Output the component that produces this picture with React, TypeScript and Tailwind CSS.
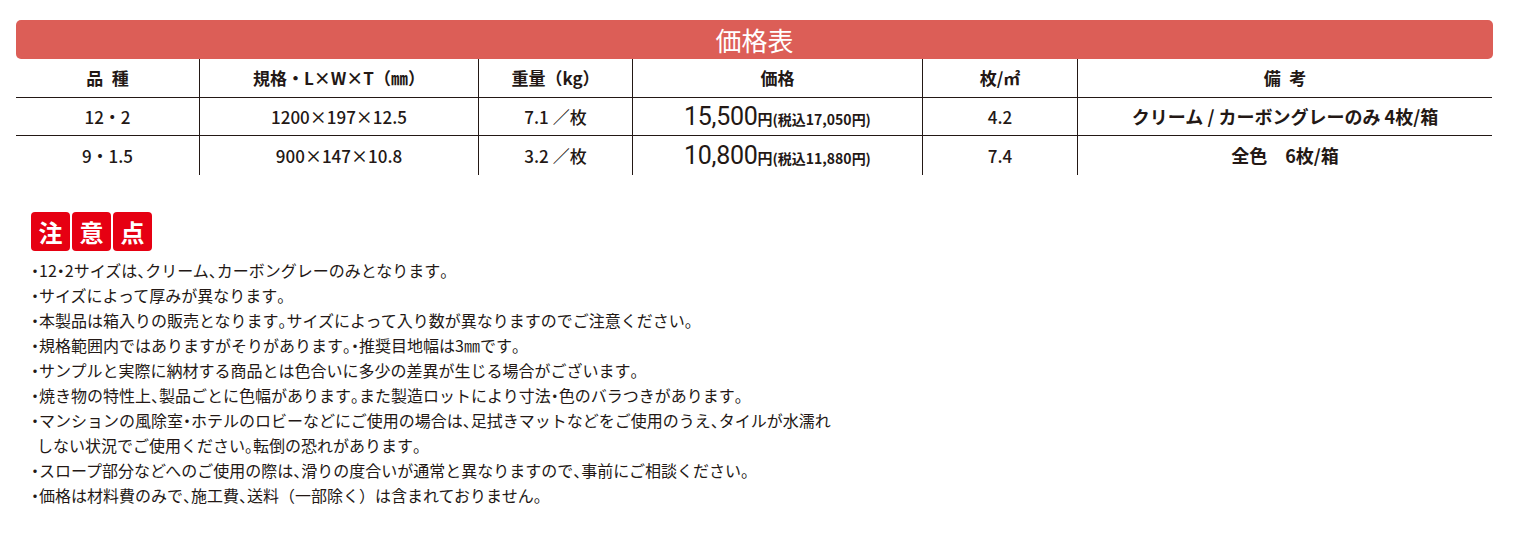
import React from "react";

const notes = [
  "・12・2サイズは、クリーム、カーボングレーのみとなります。",
  "・サイズによって厚みが異なります。",
  "・本製品は箱入りの販売となります。サイズによって入り数が異なりますのでご注意ください。",
  "・規格範囲内ではありますがそりがあります。・推奨目地幅は3㎜です。",
  "・サンプルと実際に納材する商品とは色合いに多少の差異が生じる場合がございます。",
  "・焼き物の特性上、製品ごとに色幅があります。また製造ロットにより寸法・色のバラつきがあります。",
  "・マンションの風除室・ホテルのロビーなどにご使用の場合は、足拭きマットなどをご使用のうえ、タイルが水濡れ",
  "しない状況でご使用ください。転倒の恐れがあります。",
  "・スロープ部分などへのご使用の際は、滑りの度合いが通常と異なりますので、事前にご相談ください。",
  "・価格は材料費のみで、施工費、送料（一部除く）は含まれておりません。",
];

const narrow = new Set(["・", "、", "。"]);

function NoteLine({ text }: { text: string }) {
  const parts: React.ReactNode[] = [];
  let buf = "";
  Array.from(text).forEach((ch, i) => {
    if (narrow.has(ch)) {
      if (buf) parts.push(buf);
      buf = "";
      parts.push(
        <span key={i} className='[font-feature-settings:"halt"]'>
          {ch}
        </span>
      );
    } else {
      buf += ch;
    }
  });
  if (buf) parts.push(buf);
  return <div>{parts}</div>;
}

function Cell({ children, last }: { children: React.ReactNode; last?: boolean }) {
  return (
    <div className={`flex items-center justify-center ${last ? "" : "border-r border-[#231815]"}`}>
      {children}
    </div>
  );
}

function Price({ main, tax }: { main: string; tax: string }) {
  return (
    <div className="flex items-baseline text-[#231815]">
      <span className="font-['Roboto',sans-serif] font-normal text-[25px] tracking-[-0.3px]">{main}</span>
      <span className="text-[15px] font-bold">円</span>
      <span className="text-[14px] font-bold">(税込{tax}円)</span>
    </div>
  );
}

export default function App() {
  const cols = "grid grid-cols-[184px_279px_154px_290px_155px_414px]";
  return (
    <div className="w-[1524px] h-[554px] bg-white text-[#231815] font-['Noto_Sans_CJK_JP','Noto_Sans',sans-serif]">
      <div className="pt-[20px] pl-[16px]">
        <div className="w-[1477px] h-[39px] rounded-[5px] bg-[#dc5e57] flex items-center justify-center">
          <span className="text-white text-[26px] leading-none">価格表</span>
        </div>
        <div className="w-[1476px]">
          <div className={`${cols} h-[39px] border-b border-[#231815] font-bold text-[17px]`}>
            <Cell>品{"\u2002"}種</Cell>
            <Cell>規格・L×W×T（㎜）</Cell>
            <Cell>重量（kg）</Cell>
            <Cell>価格</Cell>
            <Cell>枚/㎡</Cell>
            <Cell last>備{"\u2002"}考</Cell>
          </div>
          <div className={`${cols} h-[38px] border-b border-[#231815] text-[17px] font-medium`}>
            <Cell>12・2</Cell>
            <Cell>1200×197×12.5</Cell>
            <Cell>7.1 ／枚</Cell>
            <Cell><Price main="15,500" tax="17,050" /></Cell>
            <Cell>4.2</Cell>
            <Cell last><span className="font-bold text-[18px]">クリーム / カーボングレーのみ 4枚/箱</span></Cell>
          </div>
          <div className={`${cols} h-[39px] text-[17px] font-medium`}>
            <Cell>9・1.5</Cell>
            <Cell>900×147×10.8</Cell>
            <Cell>3.2 ／枚</Cell>
            <Cell><Price main="10,800" tax="11,880" /></Cell>
            <Cell>7.4</Cell>
            <Cell last><span className="font-bold text-[18px]">全色{"\u3000"}6枚/箱</span></Cell>
          </div>
        </div>
      </div>
      <div className="pl-[31px] pt-[37px]">
        <div className="flex gap-[2px]">
          {["注", "意", "点"].map((c) => (
            <div key={c} className="w-[39px] h-[39px] rounded-[4px] bg-[#e60012] flex items-center justify-center text-white text-[24px] font-bold leading-none">
              {c}
            </div>
          ))}
        </div>
        <div className="mt-[7px] text-[16px] leading-[25px]">
          {notes.map((n, i) => (
            <div key={i} className={i === 7 ? "pl-[6px]" : ""}>
              <NoteLine text={n} />
            </div>
          ))}
        </div>
      </div>
    </div>
  );
}
